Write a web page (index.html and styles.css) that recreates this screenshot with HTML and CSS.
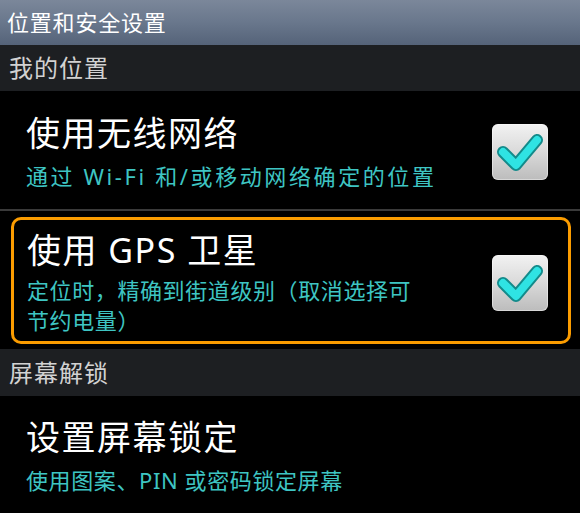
FILE: index.html
```html
<!DOCTYPE html>
<html lang="zh-CN">
<head>
<meta charset="utf-8">
<title>位置和安全设置</title>
<link rel="stylesheet" href="styles.css">
</head>
<body>
<div class="screen">
  <header class="titlebar">位置和安全设置</header>

  <div class="category">我的位置</div>

  <div class="pref">
    <div class="pref-text">
      <div class="pref-title">使用无线网络</div>
      <div class="pref-summary pref-summary-wide">通过 Wi-Fi 和/或移动网络确定的位置</div>
    </div>
    <div class="checkbox">
      <svg viewBox="0 0 56 56" width="56" height="56" aria-hidden="true">
        <path d="M11 28 L24 41 L45 16" fill="none" stroke="#138a8a" stroke-width="12" stroke-linecap="round" stroke-linejoin="round"/>
        <path d="M11 28 L24 41 L45 16" fill="none" stroke="#2fe3e3" stroke-width="8" stroke-linecap="round" stroke-linejoin="round"/>
      </svg>
    </div>
  </div>

  <div class="divider"></div>

  <div class="pref-wrap">
    <div class="pref pref-focused">
      <div class="pref-text">
        <div class="pref-title">使用 GPS 卫星</div>
        <div class="pref-summary">定位时，精确到街道级别（取消选择可<br>节约电量）</div>
      </div>
      <div class="checkbox">
        <svg viewBox="0 0 56 56" width="56" height="56" aria-hidden="true">
          <path d="M11 28 L24 41 L45 16" fill="none" stroke="#138a8a" stroke-width="12" stroke-linecap="round" stroke-linejoin="round"/>
          <path d="M11 28 L24 41 L45 16" fill="none" stroke="#2fe3e3" stroke-width="8" stroke-linecap="round" stroke-linejoin="round"/>
        </svg>
      </div>
    </div>
  </div>

  <div class="category category-2">屏幕解锁</div>

  <div class="pref pref-last">
    <div class="pref-text">
      <div class="pref-title">设置屏幕锁定</div>
      <div class="pref-summary">使用图案、PIN 或密码锁定屏幕</div>
    </div>
  </div>
</div>
</body>
</html>
```

FILE: styles.css
```css
html, body {
  margin: 0;
  padding: 0;
  background: #000;
}

body {
  font-family: "Noto Sans", "Noto Sans CJK SC", sans-serif;
  color: #fff;
  width: 580px;
  height: 513px;
  overflow: hidden;
}

.screen {
  display: flex;
  flex-direction: column;
}

.titlebar {
  height: 45px;
  line-height: 45px;
  padding-left: 7px;
  font-size: 22px;
  letter-spacing: 0.8px;
  color: #fff;
  background: linear-gradient(#7b879a 0%, #69778c 50%, #556379 100%);
  box-sizing: border-box;
}

.category {
  height: 46px;
  line-height: 46px;
  padding-left: 9px;
  font-size: 24px;
  letter-spacing: 1px;
  color: #d2d2d2;
  background: #1d1f22;
}

.category-2 {
  height: 47px;
  line-height: 48px;
}

.pref {
  display: flex;
  align-items: center;
  padding: 22px 32px 18px 26px;
}

.pref-text {
  flex: 1;
  min-width: 0;
}

.pref-title {
  font-size: 34px;
  line-height: 40px;
  letter-spacing: 1.5px;
  color: #fff;
  white-space: nowrap;
}

.pref-summary {
  margin-top: 8px;
  font-size: 22px;
  line-height: 30px;
  letter-spacing: 0.6px;
  color: #3ec5c3;
  white-space: nowrap;
}

.pref-summary-wide {
  letter-spacing: 2.6px;
}

.divider {
  height: 2px;
  background: #3a3a3a;
}

.pref-wrap {
  padding: 6px 9px 5px 11px;
}

.pref-focused {
  border: 3px solid #fb9c00;
  border-radius: 10px;
  padding: 10px 20px 6px 13px;
}

.pref-focused .pref-summary {
  margin-top: 5px;
}

.pref-last {
  padding-top: 21px;
}

.checkbox {
  width: 56px;
  height: 56px;
  flex: none;
  border-radius: 6px;
  background: linear-gradient(#f2f2f2 0%, #dcdcdc 45%, #bcbcbc 100%);
  box-shadow: inset 0 0 0 1px rgba(255,255,255,0.4);
}

.checkbox svg {
  display: block;
}
```
